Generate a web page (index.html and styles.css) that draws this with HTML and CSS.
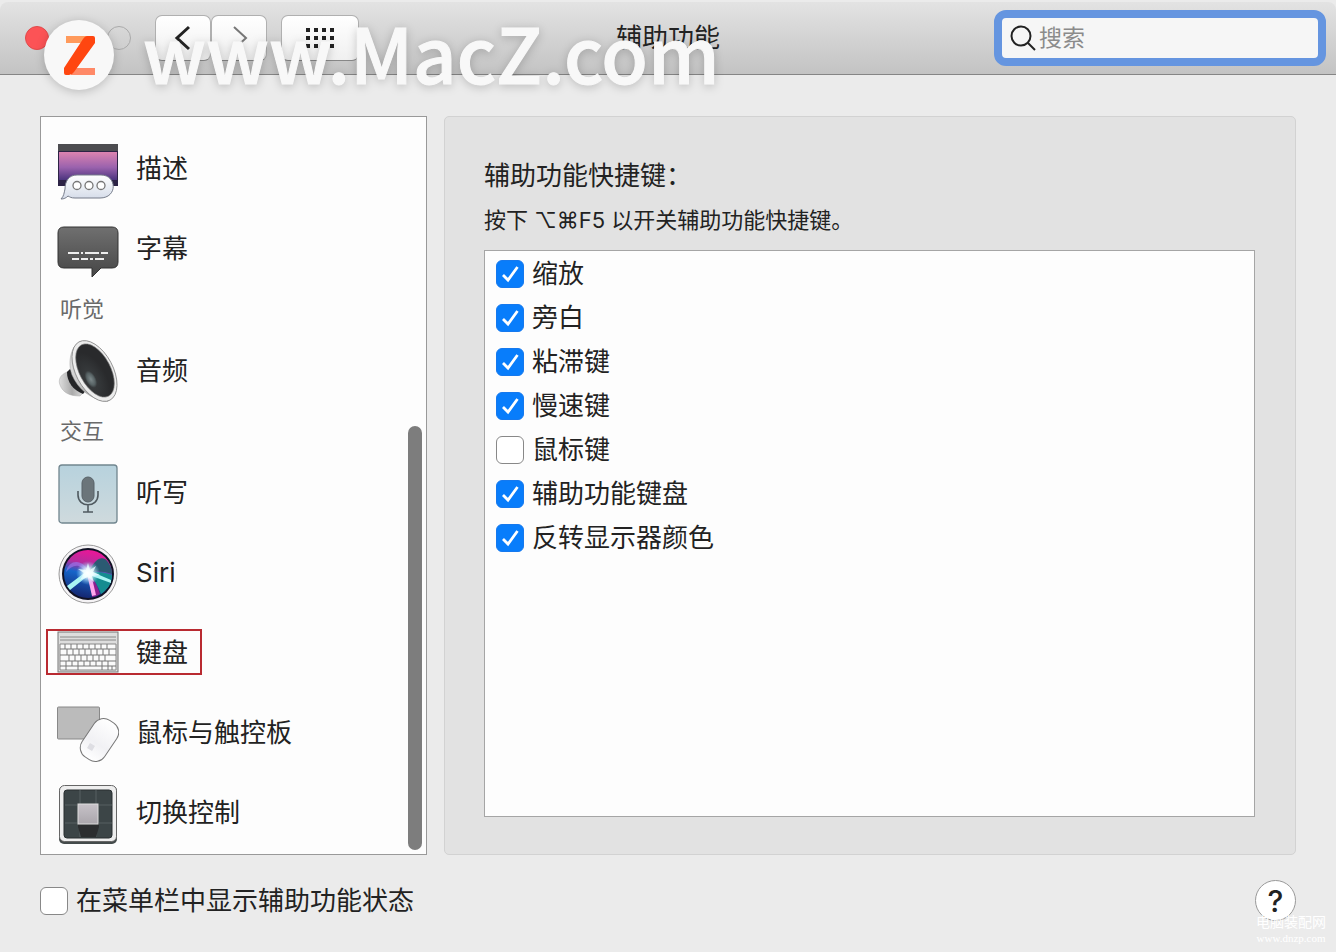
FILE: index.html
```
<!DOCTYPE html>
<html lang="zh-CN">
<head>
  <meta charset="utf-8">
  <meta name="viewport" content="width=device-width, initial-scale=1">
  <title>辅助功能</title>
  <link rel="stylesheet" href="styles.css">
</head>
<body>
  <div class="window">
    <header class="toolbar">
      <div class="toolbar-left">
        <div class="lights">
          <button class="light close" aria-label="关闭"></button>
          <button class="light minimize" aria-label="最小化"></button>
          <button class="light" aria-label="缩放窗口"></button>
        </div>
        <div class="nav">
          <button class="tool-button" aria-label="后退">
            <svg width="20" height="28" viewBox="0 0 20 28"><path d="M16 3 4 14l12 11" fill="none" stroke="#222" stroke-width="3"/></svg>
          </button>
          <button class="tool-button" aria-label="前进">
            <svg width="20" height="28" viewBox="0 0 20 28"><path d="M5 3l12 11L5 25" fill="none" stroke="#777" stroke-width="2"/></svg>
          </button>
        </div>
        <button class="tool-button wide" aria-label="显示全部">
          <svg width="28" height="20" viewBox="0 0 28 20" fill="#222">
            <path d="M0 0h4v4H0zM8 0h4v4H8zM16 0h4v4h-4zM24 0h4v4h-4zM0 8h4v4H0zM8 8h4v4H8zM16 8h4v4h-4zM24 8h4v4h-4zM0 16h4v4H0zM8 16h4v4H8zM16 16h4v4h-4zM24 16h4v4h-4z"/>
          </svg>
        </button>
      </div>
      <h1 class="title">辅助功能</h1>
      <label class="search">
        <svg width="26" height="26" viewBox="0 0 26 26" fill="none" stroke="#222" stroke-width="2"><circle cx="11" cy="11" r="9.5"/><path d="M18 18l7 7"/></svg>
        <input type="search" placeholder="搜索" aria-label="搜索">
      </label>
    </header>

    <main class="content">
      <nav class="sidebar">
        <ul class="sidebar-list">
          <li class="row">
            <a href="#" class="item">
              <svg class="icon" viewBox="0 0 62 64">
                <defs>
                  <linearGradient id="sky" x1="0" y1="0" x2="0" y2="1"><stop offset="0" stop-color="#dc83b0"/><stop offset=".55" stop-color="#9a62ad"/><stop offset="1" stop-color="#4b347e"/></linearGradient>
                  <linearGradient id="bubble" x1="0" y1="0" x2="0" y2="1"><stop offset="0" stop-color="#fff"/><stop offset="1" stop-color="#d5dce9"/></linearGradient>
                </defs>
                <path d="M1 8h60v42H1z" fill="#2c2345"/>
                <path d="M1 8h60v7H1z" fill="#4c4c50"/>
                <path d="M2 16h58v28H2z" fill="url(#sky)"/>
                <path d="M20 39h24c16 0 17 23-1 23H18c-4 0-5-1-7-2-2 2-4 3-7 3 3-3 3-6 4-10 0-8 4-14 12-14z" fill="url(#bubble)" stroke="#777d8b"/>
                <g fill="#fff" stroke="#777" stroke-width="1.3"><circle cx="20" cy="49.500" r="4"/><circle cx="32" cy="49.500" r="4"/><circle cx="44" cy="49.500" r="4"/></g>
              </svg>
              <span>描述</span>
            </a>
          </li>
          <li class="row">
            <a href="#" class="item">
              <svg class="icon" viewBox="0 0 62 64">
                <defs><linearGradient id="caption" x1="0" y1="0" x2="0" y2="1"><stop offset="0" stop-color="#707070"/><stop offset="1" stop-color="#464646"/></linearGradient></defs>
                <path d="M7 11h48q6 0 6 6v29q0 6-6 6H44L35 61V52H7q-6 0-6-6V17q0-6 6-6z" fill="url(#caption)" stroke="#333"/>
                <path d="M11 37h11m2 0h2m2 0h14m2 0h7M15 43h7m2 0h7m2 0h3m2 0h9" stroke="#eee" stroke-width="2"/>
              </svg>
              <span>字幕</span>
            </a>
          </li>
          <li class="group">听觉</li>
          <li class="row">
            <a href="#" class="item">
              <svg class="icon" viewBox="0 0 62 64">
                <defs>
                  <linearGradient id="metal"><stop offset="0" stop-color="#ddd"/><stop offset=".5" stop-color="#aaa"/><stop offset="1" stop-color="#e5e5e5"/></linearGradient>
                  <radialGradient id="cone" cx=".25" cy=".6"><stop offset="0" stop-color="#7d898b"/><stop offset=".22" stop-color="#566163"/><stop offset=".32" stop-color="#36393b"/><stop offset="1" stop-color="#292a2c"/></radialGradient>
                </defs>
                <path d="M10 34c-7 3-9 8-7 13 3 8 10 11 20 11l5-5-15-20z" fill="url(#metal)" stroke="#aaa" stroke-width=".5"/>
                <path d="M10 34c0 10 6 18 16 22l4-5-17-20z" fill="#242527"/>
                <path d="M17 9c-5 9-5 20-2 28 6 14 18 24 36 27z" fill="url(#metal)" stroke="#999" stroke-width=".5"/>
                <ellipse cx="37.500" cy="33" rx="18.500" ry="33" transform="rotate(-28 37.500 33)" fill="#ececec" stroke="#888" stroke-width=".8"/>
                <ellipse cx="38" cy="32.500" rx="15.500" ry="29" transform="rotate(-28 38 32.500)" fill="url(#cone)" stroke="#777" stroke-width=".6"/>
              </svg>
              <span>音频</span>
            </a>
          </li>
          <li class="group">交互</li>
          <li class="row">
            <a href="#" class="item">
              <svg class="icon" viewBox="0 0 62 64">
                <defs><linearGradient id="dictation" x1="0" y1="0" x2="0" y2="1"><stop offset="0" stop-color="#b7d2dd"/><stop offset="1" stop-color="#cfdadd"/></linearGradient></defs>
                <rect x="2" y="5" width="58" height="58" rx="3" fill="url(#dictation)" stroke="#71868f" stroke-width="1.300"/>
                <rect x="25" y="17" width="12" height="25" rx="6" fill="#6b757a" stroke="#586268"/>
                <path d="M21 31v4c0 13 20 13 20 0v-4M31 45v7M26 52h10" fill="none" stroke="#505a60" stroke-width="1.600"/>
              </svg>
              <span>听写</span>
            </a>
          </li>
          <li class="row">
            <a href="#" class="item">
              <svg class="icon" viewBox="0 0 62 64">
                <defs>
                  <linearGradient id="siri" x1=".6" y1="0" x2=".4" y2="1"><stop offset="0" stop-color="#ee1597"/><stop offset=".3" stop-color="#b32d9e"/><stop offset=".5" stop-color="#1665ca"/><stop offset="1" stop-color="#14256f"/></linearGradient>
                  <radialGradient id="glow"><stop offset="0" stop-color="#fff"/><stop offset=".4" stop-color="#eff" stop-opacity=".8"/><stop offset="1" stop-color="#8df" stop-opacity="0"/></radialGradient>
                </defs>
                <circle cx="31" cy="34" r="29" fill="#f5f3f5" stroke="#999"/>
                <circle cx="31" cy="34" r="26" fill="#111225"/>
                <circle cx="31" cy="34" r="24" fill="url(#siri)"/>
                <path d="M33 30c4-9 10-14 15-11 5 4 7 10 7 15-8-3-14-3-22-2z" fill="#2b5a72"/>
                <path d="M31 33c7-2 16-1 24 2 0 9-5 15-11 19-3-8-7-15-13-21z" fill="#158c90"/>
                <path d="M31 33c7 7 10 14 12 21-3 2-6 3-8 3 0-9-1-17-4-24z" fill="#8c1f8e"/>
                <path d="M30 34c-8-13-15-8-21-2 3-14 18-13 23 1" fill="#a077ec" opacity=".65"/>
                <path d="M30 31 10 46l3 4 19-15zM33 31l21 9v3L32 35z" fill="#a9f5f3"/>
                <path d="M30 34l5 22 4-1-5-21z" fill="#ffa8ed"/>
                <path d="M31 23l2 7 6-4-3 6 7 3-8 1 2 6-6-5-8 3 4-7-6-4 8 1z" fill="#fff" opacity=".85"/>
                <circle cx="31" cy="33" r="12" fill="url(#glow)"/>
              </svg>
              <span>Siri</span>
            </a>
          </li>
          <li class="row">
            <a href="#" class="item marked" aria-current="page">
              <svg class="icon keyboard" viewBox="0 0 62 42">
                <rect x="1" y="1" width="60" height="40" fill="#ddd" stroke="#777"/>
                <path d="M3 6h56M3 9h56" stroke="#888"/>
                <path d="M3 13h56v26H3z" fill="#fafafa" stroke="#888"/>
                <path d="M3 18h56M3 24h56M3 30h56M3 35h56M8 13v5M14 13v5M20 13v5M26 13v5M32 13v5M38 13v5M44 13v5M50 13v5M10 18v6M16 18v6M22 18v6M28 18v6M34 18v6M40 18v6M46 18v6M52 18v6M12 24v6M18 24v6M24 24v6M30 24v6M36 24v6M42 24v6M48 24v6M9 30v9M15 30v5M21 30v9M27 30v5M33 30v5M39 30v5M45 30v9M51 30v9M55 35v4" fill="none" stroke="#777"/>
              </svg>
              <span>键盘</span>
            </a>
          </li>
          <li class="row">
            <a href="#" class="item">
              <svg class="icon" viewBox="0 0 62 64">
                <defs><linearGradient id="mouse" x1="0" y1="0" x2="0" y2="1"><stop offset="0" stop-color="#fff"/><stop offset=".6" stop-color="#f1f1f4"/><stop offset="1" stop-color="#fff"/></linearGradient></defs>
                <rect x="0.500" y="7" width="42" height="32" rx="1" fill="#bbb" stroke="#888"/>
                <rect x="29" y="18" width="27" height="44" rx="11" transform="rotate(34 42.500 40)" fill="url(#mouse)" stroke="#777"/>
                <path d="M33 43l5 3-3 5-5-3z" fill="#dedee3"/>
              </svg>
              <span>鼠标与触控板</span>
            </a>
          </li>
          <li class="row">
            <a href="#" class="item">
              <svg class="icon" viewBox="0 0 62 64">
                <defs><linearGradient id="key" x1="0" y1="0" x2="0" y2="1"><stop offset="0" stop-color="#c7c2c8"/><stop offset="1" stop-color="#aaa6ac"/></linearGradient></defs>
                <rect x="2" y="6" width="58" height="58" rx="5" fill="#444b4b"/>
                <rect x="2.500" y="5.500" width="57" height="56" rx="5" fill="#eee" stroke="#666"/>
                <rect x="7" y="10" width="48" height="48" rx="3" fill="#3c4547" stroke="#292f31"/>
                <path d="M23 10v14M39 10v14M23 44v13M39 44v13M8 25h12M42 25h13M8 43h12M42 43h13" stroke="#566062"/>
                <path d="M21 43h21v4l-3 10H24l-3-10z" fill="#2b2d2f"/>
                <rect x="21" y="24" width="20" height="20" fill="url(#key)" stroke="#ddd"/>
              </svg>
              <span>切换控制</span>
            </a>
          </li>
        </ul>
        <div class="scrollbar"></div>
      </nav>

      <section class="panel">
        <h2 class="panel-title">辅助功能快捷键：</h2>
        <p class="hint">按下 ⌥⌘F5 以开关辅助功能快捷键。</p>
        <div class="options">
          <label class="check"><input type="checkbox" checked>缩放</label>
          <label class="check"><input type="checkbox" checked>旁白</label>
          <label class="check"><input type="checkbox" checked>粘滞键</label>
          <label class="check"><input type="checkbox" checked>慢速键</label>
          <label class="check"><input type="checkbox">鼠标键</label>
          <label class="check"><input type="checkbox" checked>辅助功能键盘</label>
          <label class="check"><input type="checkbox" checked>反转显示器颜色</label>
        </div>
      </section>
    </main>

    <footer class="footer">
      <label class="check"><input type="checkbox">在菜单栏中显示辅助功能状态</label>
      <button class="help" aria-label="帮助">?</button>
    </footer>

    <div class="watermark">
      <svg width="72" height="72" viewBox="0 0 72 72">
        <circle cx="36" cy="36" r="35" fill="#f8f8f8"/>
        <path d="M23 17h26v7H23z" fill="#ff9a5c"/>
        <path d="M28 49h24v7H28z" fill="#ff8967"/>
        <path d="M44 17h6q2 0 2 2v5L31 53q-2 3-5 3h-3q-2 0-2-2v-5l19-29q2-3 4-3z" fill="#ff4610"/>
      </svg>
      <span>www.MacZ.com</span>
    </div>
    <div class="stamp">
      <div class="stamp-name">电脑装配网</div>
      <div class="stamp-url">www.dnzp.com</div>
    </div>
  </div>
</body>
</html>
```
FILE: styles.css
```
* {
  box-sizing: border-box;
}
body {
  margin: 0;
  background: #f1f1f1;
  color: #222;
  font-family: Inter, "Noto Sans CJK SC", sans-serif;
  font-size: 26px;
  line-height: 36px;
}
button, input {
  font: inherit;
  color: inherit;
}
button {
  padding: 0;
}
.window {
  position: relative;
  display: flex;
  flex-direction: column;
  min-height: 100vh;
  padding-top: 2px;
  overflow: hidden;
  background: #ebebeb;
}

/* toolbar */
.toolbar {
  display: grid;
  grid-template-columns: 1fr auto 1fr;
  align-items: center;
  height: 73px;
  border-bottom: 1px solid #858585;
  border-radius: 8px 8px 0 0;
  background: linear-gradient(#e3e3e3, #c3c3c3);
}
.toolbar-left {
  display: flex;
  align-items: center;
  gap: 14px;
  padding-left: 25px;
}
.lights {
  display: flex;
  gap: 17px;
  margin-right: 10px;
}
.light {
  width: 24px;
  height: 24px;
  border: 1px solid #aaa;
  border-radius: 50%;
  background: transparent;
}
.close {
  border-color: #e04a4b;
  background: #fc5356;
}
.minimize {
  border-color: #d8b26a;
  background: #f5c66c;
}
.nav {
  display: flex;
}
.tool-button {
  display: flex;
  align-items: center;
  justify-content: center;
  width: 56px;
  height: 46px;
  border: 1px solid #b0b0b0;
  border-bottom-color: #888;
  border-radius: 7px;
  background: linear-gradient(#fff, #f0f0f0);
}
.wide {
  width: 78px;
}
.title {
  margin: 0;
  font-size: 26px;
  font-weight: 400;
}
.search {
  display: flex;
  align-items: center;
  justify-self: end;
  gap: 3px;
  width: 332px;
  height: 56px;
  margin-right: 10px;
  padding: 0 8px;
  border: 8px solid #6595e0;
  border-radius: 12px;
  background: #f6f6f6;
}
.search svg {
  flex: none;
}
.search input {
  min-width: 0;
  flex: 1;
  padding: 0;
  border: 0;
  outline: 0;
  background: transparent;
  font-size: 23px;
}
.search input::placeholder {
  color: #8b8b8b;
}

/* columns */
.content {
  display: flex;
  flex: 1;
  gap: 17px;
  padding: 41px 40px 0;
}
.sidebar {
  position: relative;
  flex: 0 0 387px;
  padding: 11px 5px 2px;
  border: 1px solid #999;
  background: #fdfdfd;
}
.sidebar-list {
  margin: 0;
  padding: 0;
  list-style: none;
}
.row {
  display: flex;
  align-items: center;
  height: 80px;
}
.item {
  display: flex;
  align-items: center;
  gap: 17px;
  padding: 0 12px 0 9px;
  border: 2px solid transparent;
  color: inherit;
  text-decoration: none;
}
.item span {
  padding-top: 2px;
}
.marked {
  border-color: #b92a31;
}
.icon {
  width: 62px;
  height: 64px;
}
.keyboard {
  height: 42px;
}
.group {
  height: 42px;
  padding-left: 14px;
  color: #6a6a6a;
  font-size: 22px;
  line-height: 42px;
}
.scrollbar {
  position: absolute;
  right: 4px;
  bottom: 4px;
  width: 14px;
  height: 424px;
  border-radius: 7px;
  background: #7d7d7d;
}
.panel {
  display: flex;
  flex: 1;
  flex-direction: column;
  padding: 41px 40px 37px 39px;
  border: 1px solid #d2d2d2;
  border-radius: 5px;
  background: #e2e2e2;
}
.panel-title {
  margin: 0;
  font-size: 26px;
  font-weight: 400;
}
.hint {
  margin: 10px 0 14px;
  font-size: 22px;
  line-height: 32px;
}
.options {
  flex: 1;
  padding: 1px 11px;
  border: 1px solid #a5a5a5;
  background: #fdfdfd;
}

/* checkboxes */
.check {
  display: flex;
  align-items: center;
  gap: 8px;
  height: 44px;
}
.check input {
  appearance: none;
  width: 28px;
  height: 28px;
  margin: 0;
  border: 1px solid #888;
  border-radius: 6px;
  background: #fff;
}
.check input:checked {
  border-color: #1679ee;
  background: #087dfb url("data:image/svg+xml,%3Csvg xmlns='http://www.w3.org/2000/svg' viewBox='0 0 26 26'%3E%3Cpath d='M6 14l5 5L20.500 6' fill='none' stroke='white' stroke-width='2.800'/%3E%3C/svg%3E") center / 26px no-repeat;
}

/* footer */
.footer {
  display: flex;
  align-items: center;
  justify-content: space-between;
  height: 97px;
  padding: 0 40px 6px;
}
.help {
  width: 41px;
  height: 41px;
  border: 1px solid #999;
  border-radius: 50%;
  background: #fff;
  font-size: 30px;
  font-weight: 500;
}

/* overlays */
.watermark {
  position: absolute;
  top: 6px;
  left: 43px;
  display: flex;
  align-items: center;
  gap: 28px;
  color: #f8f8f8;
  font-family: "Noto Sans CJK SC", sans-serif;
  font-size: 76px;
  font-weight: 500;
  line-height: 90px;
  -webkit-text-stroke: 1px #f8f8f8;
  pointer-events: none;
  filter: drop-shadow(0 2px 5px rgba(0, 0, 0, 0.2));
}
.watermark span {
  padding-bottom: 8px;
}
.stamp {
  position: absolute;
  right: 10px;
  bottom: 6px;
  color: #fff;
  font-size: 14px;
  line-height: 16px;
  text-align: center;
  pointer-events: none;
}
.stamp-url {
  font-family: "Liberation Serif", serif;
  font-size: 11px;
}
```
